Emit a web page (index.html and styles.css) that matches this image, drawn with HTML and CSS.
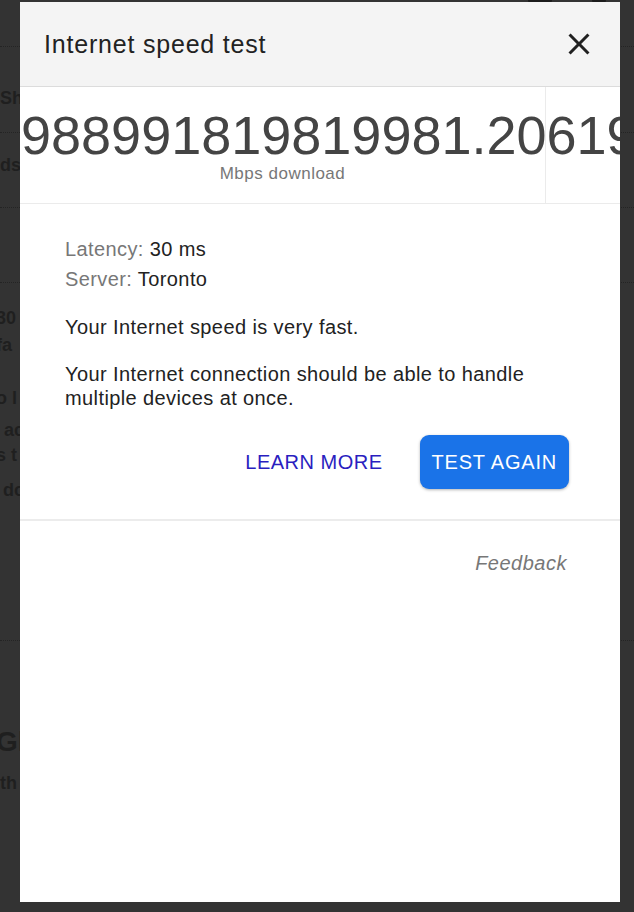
FILE: index.html
```html
<!DOCTYPE html>
<html lang="en">
<head>
    <meta charset="UTF-8">
    <meta name="viewport" content="width=device-width, initial-scale=1.0">
    <title>Internet speed test</title>
    <link rel="stylesheet" href="styles.css">
</head>
<body>
    <!-- page behind the dialog -->
    <div class="page">
        <div class="row row-top">
            <span class="top-icon"></span>
            <span class="top-icon small"></span>
        </div>
        <div class="row row-a"><span class="txt">Sh</span></div>
        <div class="row row-b"><span class="txt">ds</span></div>
        <div class="row row-c"></div>
        <div class="row row-d">
            <p class="txt l1">30</p>
            <p class="txt l2">fa</p>
            <p class="txt l3">o l</p>
            <p class="txt l4">ac</p>
            <p class="txt l5">s t</p>
            <p class="txt l6">do</p>
        </div>
        <div class="row row-e">
            <p class="txt big">Gl</p>
            <p class="txt l7">th</p>
        </div>
    </div>

    <div class="dialog">
        <div class="dialog-head">
            <h1 class="dialog-title">Internet speed test</h1>
            <button class="close-btn" aria-label="Close">
                <svg width="36" height="36" viewBox="0 0 24 24">
                    <path d="M19 6.41L17.59 5 12 10.59 6.41 5 5 6.41 10.59 12 5 17.59 6.41 19 12 13.41 17.59 19 19 17.59 13.41 12z" fill="#202020"/>
                </svg>
            </button>
        </div>

        <div class="speed-row">
            <div class="speed-main">
                <div class="speed-num">988991819819981.20619</div>
                <div class="speed-unit">Mbps download</div>
            </div>
            <div class="speed-side"></div>
        </div>

        <div class="details">
            <div class="stat"><span class="label">Latency:</span> 30 ms</div>
            <div class="stat"><span class="label">Server:</span> Toronto</div>

            <p class="msg msg-first">Your Internet speed is very fast.</p>
            <p class="msg">Your Internet connection should be able to handle multiple devices at once.</p>

            <div class="actions">
                <a class="link-btn" href="#">LEARN MORE</a>
                <button class="main-btn">TEST AGAIN</button>
            </div>
        </div>

        <div class="dialog-foot">
            <a class="feedback" href="#">Feedback</a>
        </div>
    </div>
</body>
</html>
```

FILE: styles.css
```css
* {
    box-sizing: border-box;
}
body {
    margin: 0;
    height: 912px;
    overflow: hidden;
    background-color: #333333;
    font-family: "Liberation Sans", Arial, sans-serif;
}

/* dimmed page underneath */
.page {
    color: #1f1f1f;
    font-size: 18px;
    font-weight: bold;
}
.row {
    border-bottom: 1px dotted #242424;
}
.row p {
    margin: 0;
}
.row-top {
    height: 46px;
    border-bottom: none;
    display: flex;
    justify-content: flex-end;
    gap: 40px;
    padding-right: 28px;
}
.top-icon {
    width: 24px;
    height: 6px;
    background-color: #1c1c1c;
    border-radius: 0 0 12px 12px;
}
.top-icon.small {
    width: 14px;
}
.row-a {
    height: 87px;
    padding-top: 41px;
    line-height: 20px;
    border-top: 1px dotted #242424;
}
.row-b {
    height: 75px;
    padding-top: 22px;
    line-height: 20px;
}
.row-c {
    height: 75px;
}
.row-d {
    height: 358px;
    padding-top: 24px;
    line-height: 22px;
}
.row-d .txt {
    text-indent: -4px;
}
.l2 { margin-top: 5px !important; }
.l3 { margin-top: 31px !important; }
.l4 { margin-top: 10px !important; text-indent: 4px !important; }
.l5 { margin-top: 3px !important; }
.l6 { margin-top: 13px !important; text-indent: 3px !important; }
.row-e {
    border-bottom: none;
    padding-top: 84px;
}
.big {
    font-size: 28px;
    line-height: 34px;
    text-indent: -4px;
}
.l7 {
    margin-top: 14px !important;
    line-height: 20px;
}

/* dialog */
.dialog {
    position: fixed;
    left: 20px;
    top: 2px;
    width: 600px;
    height: 900px;
    background-color: #fff;
    display: flex;
    flex-direction: column;
}
.dialog-head {
    height: 85px;
    background-color: #f4f4f4;
    border-bottom: 1px solid #dcdcdc;
    display: flex;
    align-items: center;
    justify-content: space-between;
    padding: 0 23px 0 24px;
}
.dialog-title {
    margin: 0;
    font-weight: normal;
    font-size: 25px;
    letter-spacing: 0.8px;
    color: #222;
}
.close-btn {
    border: none;
    background: none;
    padding: 0;
    width: 36px;
    height: 36px;
    display: flex;
    align-items: center;
    justify-content: center;
}

.speed-row {
    height: 117px;
    border-bottom: 1px solid #ebebeb;
    display: flex;
}
.speed-main {
    width: 526px;
    border-right: 1px solid #ebebeb;
    padding-top: 18px;
}
.speed-num {
    font-size: 54px;
    line-height: 61px;
    color: #444;
    white-space: nowrap;
    padding-left: 1px;
    width: 600px;
    overflow: hidden;
}
.speed-unit {
    text-align: center;
    font-size: 17px;
    letter-spacing: 0.5px;
    line-height: 16px;
    color: #777;
}
.speed-side {
    flex: 1;
}

.details {
    padding: 30px 51px 30px 45px;
    border-bottom: 2px solid #ececec;
    font-size: 20px;
    letter-spacing: 0.4px;
    color: #222;
}
.stat {
    line-height: 30px;
}
.label {
    color: #777;
}
.msg {
    margin: 23px 0 0;
    line-height: 24px;
}
.msg-first {
    margin-top: 21px;
}
.actions {
    margin-top: 25px;
    display: flex;
    justify-content: flex-end;
    align-items: center;
    gap: 37px;
}
.link-btn {
    color: #2a1ec0;
    text-decoration: none;
    font-size: 20px;
    letter-spacing: 0.5px;
}
.main-btn {
    height: 54px;
    padding: 0 12px;
    border: none;
    border-radius: 9px;
    background-color: #1a73e8;
    color: #fff;
    font-family: "Liberation Sans", Arial, sans-serif;
    font-size: 20px;
    letter-spacing: 0.8px;
    box-shadow: 0 1px 3px rgba(0, 0, 0, 0.3);
}

.dialog-foot {
    padding: 31px 53px 0 0;
    text-align: right;
}
.feedback {
    font-size: 20px;
    letter-spacing: 0.5px;
    font-style: italic;
    color: #777;
    text-decoration: none;
}
```
